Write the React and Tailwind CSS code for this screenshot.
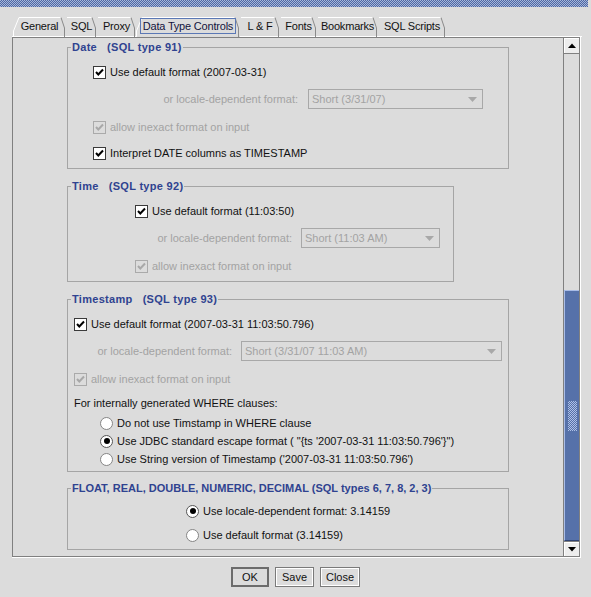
import React from 'react';

const TABS = [
  { label: 'General', w: 'w-[53px]', n: 53, first: true },
  { label: 'SQL', w: 'w-[31px]', n: 31 },
  { label: 'Proxy', w: 'w-[39px]', n: 39 },
  { label: 'Data Type Controls', w: 'w-[104px]', n: 104, sel: true },
  { label: 'L & F', w: 'w-[40px]', n: 40 },
  { label: 'Fonts', w: 'w-[37px]', n: 37 },
  { label: 'Bookmarks', w: 'w-[61px]', n: 61 },
  { label: 'SQL Scripts', w: 'w-[68px]', n: 68 },
];

function Tab({ t }) {
  const W = t.n;
  const slant = t.first || t.sel;
  return (
    <div
      className={`relative flex h-[20px] shrink-0 items-center justify-center ${t.w} ${
        t.sel ? 'border-b border-transparent' : 'border-b border-white'
      }`}
    >
      <svg className="absolute left-0 top-0" width={W} height="20" viewBox={`0 0 ${W} 20`}>
        <path d={`M${slant ? 6 : 1} 0.5 H${W - 5}`} stroke="#ffffff" strokeWidth="1" fill="none" />
        {slant && <path d="M0.5 20 V14 L6 0.5" stroke="#ffffff" strokeWidth="1" fill="none" />}
        <path d={`M${W - 5} 0.5 L${W - 1.5} 11 V20`} stroke="#8a8a8a" strokeWidth="1" fill="none" />
      </svg>
      {t.sel ? (
        <span className="relative mt-[-1px] flex h-[16px] w-[96px] items-center justify-center border border-[#5b78b5] tracking-[-0.2px] text-[#14143c]">
          {t.label}
        </span>
      ) : (
        <span className="relative tracking-[-0.2px] text-[#111]">{t.label}</span>
      )}
    </div>
  );
}

function Check({ disabled }) {
  return (
    <span
      className={
        disabled
          ? 'flex h-[13px] w-[13px] shrink-0 items-center justify-center border border-[#aaaaaa] bg-[#dcdcdc]'
          : 'flex h-[13px] w-[13px] shrink-0 items-center justify-center border border-[#3a3a3a] bg-white'
      }
    >
      <svg width="11" height="11" viewBox="0 0 11 11">
        <path
          d="M2 5 L4.3 7.5 L9 2.5"
          fill="none"
          stroke={disabled ? '#a8a8a8' : '#000000'}
          strokeWidth="2"
        />
      </svg>
    </span>
  );
}

function Radio({ on }) {
  return (
    <span
      className={
        on
          ? 'flex h-[13px] w-[13px] shrink-0 items-center justify-center rounded-full border border-[#555555] bg-white'
          : 'flex h-[13px] w-[13px] shrink-0 items-center justify-center rounded-full border border-[#858585] bg-white'
      }
    >
      {on && <span className="h-[6px] w-[6px] rounded-full bg-black" />}
    </span>
  );
}

function Combo({ w, text }) {
  return (
    <div className={`flex h-[20px] items-center border border-[#a8a8a8] pl-[3px] text-[#a3a3a3] ${w}`}>
      <span className="flex-1 whitespace-nowrap">{text}</span>
      <svg className="mr-[5px]" width="9" height="5" viewBox="0 0 9 5">
        <path d="M0 0 H9 L4.5 5 Z" fill="#a8a8a8" />
      </svg>
    </div>
  );
}

function Group({ title, w, bodyClass, children, track }) {
  return (
    <div className={w}>
      <div className="flex h-[13px] items-end">
        <div className="h-[7px] w-[4px] border-l border-t border-[#a5a5a5]" />
        <span
          className={`self-center whitespace-pre px-[1px] font-bold leading-[13px] text-[#2f4390] ${track}`}
        >
          {title}
        </span>
        <div className="h-[7px] flex-1 border-r border-t border-[#a5a5a5]" />
      </div>
      <div className={`border-x border-b border-[#a5a5a5] ${bodyClass}`}>{children}</div>
    </div>
  );
}

function CheckRow({ label, disabled, pad, extra }) {
  return (
    <div className={`flex h-[20px] items-center gap-[4px] ${pad} ${extra || ''}`}>
      <Check disabled={disabled} />
      <span className={disabled ? 'whitespace-nowrap text-[#a3a3a3]' : 'whitespace-nowrap text-[#111]'}>
        {label}
      </span>
    </div>
  );
}

function RadioRow({ label, on, pad, h }) {
  return (
    <div className={`flex items-center gap-[4px] ${h} ${pad}`}>
      <Radio on={on} />
      <span className="whitespace-nowrap text-[#111]">{label}</span>
    </div>
  );
}

function Btn({ label, w, def }) {
  return (
    <div
      className={
        def
          ? `flex h-[20px] items-center justify-center border-2 border-[#6c6c6c] text-[#111] ${w}`
          : `flex h-[20px] items-center justify-center border border-[#7a7a7a] text-[#111] shadow-[inset_1px_1px_0_#ffffff,inset_-1px_-1px_0_#ffffff] ${w}`
      }
    >
      {label}
    </div>
  );
}

export default function App() {
  return (
    <div className="flex h-[597px] w-[591px] flex-col overflow-hidden bg-[#dcdcdc] font-['Liberation_Sans',Arial,sans-serif] text-[11px] leading-[13px] text-[#111]">
      <div className="mr-[3px] h-[7px] bg-[repeating-conic-gradient(#4d68a4_0%_25%,#a6b5d9_0%_50%)] bg-[length:2px_2px]" />

      {/* tabs */}
      <div className="ml-[12px] mt-[10px] flex w-[570px]">
        <div className="h-[20px] w-[1px] border-b border-white" />
        {TABS.map((t) => (
          <Tab key={t.label} t={t} />
        ))}
        <div className="h-[20px] flex-1 border-b border-white" />
      </div>

      {/* scroll pane */}
      <div className="ml-[12px] w-[569px] border-b border-r border-white">
        <div className="flex h-[520px] w-[568px] border border-[#808080]">
          <div className="h-full w-[550px] overflow-hidden pl-[54px] pt-[3px]">
            <Group
              title={'Date   (SQL type 91)'}
              w="w-[442px]"
              track="tracking-[0.3px]"
              bodyClass="pt-[8px] pb-[5px]"
            >
              <CheckRow label="Use default format (2007-03-31)" pad="pl-[25px]" />
              <div className="mt-[7px] flex h-[20px] items-center justify-end pr-[25px]">
                <span className="whitespace-nowrap text-[#a3a3a3]">or locale-dependent format:</span>
                <div className="ml-[10px]">
                  <Combo w="w-[175px]" text="Short (3/31/07)" />
                </div>
              </div>
              <CheckRow label="allow inexact format on input" disabled pad="pl-[25px]" extra="mt-[8px]" />
              <CheckRow label="Interpret DATE columns as TIMESTAMP" pad="pl-[25px]" extra="mt-[6px]" />
            </Group>

            <div className="mt-[11px]">
              <Group
                title={'Time   (SQL type 92)'}
                w="w-[387px]"
                track="tracking-[0.3px]"
                bodyClass="pt-[8px] pb-[5px]"
              >
                <CheckRow label="Use default format (11:03:50)" pad="pl-[67px]" />
                <div className="mt-[7px] flex h-[20px] items-center justify-end pr-[13px]">
                  <span className="whitespace-nowrap text-[#a3a3a3]">or locale-dependent format:</span>
                  <div className="ml-[9px]">
                    <Combo w="w-[139px]" text="Short (11:03 AM)" />
                  </div>
                </div>
                <CheckRow label="allow inexact format on input" disabled pad="pl-[67px]" extra="mt-[8px]" />
              </Group>
            </div>

            <div className="mt-[11px]">
              <Group
                title={'Timestamp   (SQL type 93)'}
                w="w-[442px]"
                track="tracking-[0.3px]"
                bodyClass="pt-[8px] pb-[3px]"
              >
                <CheckRow label="Use default format (2007-03-31 11:03:50.796)" pad="pl-[6px]" />
                <div className="mt-[7px] flex h-[20px] items-center justify-end pr-[6px]">
                  <span className="whitespace-nowrap text-[#a3a3a3]">or locale-dependent format:</span>
                  <div className="ml-[9px]">
                    <Combo w="w-[261px]" text="Short (3/31/07 11:03 AM)" />
                  </div>
                </div>
                <CheckRow label="allow inexact format on input" disabled pad="pl-[6px]" extra="mt-[8px]" />
                <div className="mt-[6px] flex h-[16px] items-center pl-[6px] text-[#111]">
                  For internally generated WHERE clauses:
                </div>
                <div className="mt-[3px]">
                  <RadioRow label="Do not use Timstamp in WHERE clause" pad="pl-[32px]" h="h-[18px]" />
                  <RadioRow
                    label={'Use JDBC standard escape format ( "{ts \'2007-03-31 11:03:50.796\'}")'}
                    on
                    pad="pl-[32px]"
                    h="h-[18px]"
                  />
                  <RadioRow
                    label={"Use String version of Timestamp ('2007-03-31 11:03:50.796')"}
                    pad="pl-[32px]"
                    h="h-[18px]"
                  />
                </div>
              </Group>
            </div>

            <div className="mt-[10px]">
              <Group
                title="FLOAT, REAL, DOUBLE, NUMERIC, DECIMAL (SQL types 6, 7, 8, 2, 3)"
                w="w-[442px]"
                track=""
                bodyClass="pt-[6px] pb-[4px]"
              >
                <RadioRow label="Use locale-dependent format: 3.14159" on pad="pl-[118px]" h="h-[20px]" />
                <div className="mt-[4px]">
                  <RadioRow label="Use default format (3.14159)" pad="pl-[118px]" h="h-[20px]" />
                </div>
              </Group>
            </div>
          </div>

          {/* scrollbar */}
          <div className="flex h-full w-[16px] flex-col border-l border-[#808080]">
            <div className="flex h-[16px] items-center justify-center border-b border-[#808080] bg-[#ededed] shadow-[inset_1px_1px_0_#ffffff]">
              <svg width="8" height="5" viewBox="0 0 8 5">
                <path d="M0 5 H8 L4 0.5 Z" fill="#000000" />
              </svg>
            </div>
            <div className="flex flex-1 flex-col justify-end">
              <div className="flex h-[251px] items-center justify-center border-b border-l border-t border-b-[#2f4373] border-l-[#a9bce6] border-t-[#a9bce6] bg-[#5671a9]">
                <div className="h-[30px] w-[9px] bg-[repeating-conic-gradient(#aec0e6_0%_25%,transparent_0%_50%)] bg-[length:2px_2px]" />
              </div>
            </div>
            <div className="flex h-[15px] items-center justify-center border-t border-[#808080] bg-[#ededed] shadow-[inset_1px_1px_0_#ffffff]">
              <svg width="8" height="5" viewBox="0 0 8 5">
                <path d="M0 0 H8 L4 4.5 Z" fill="#000000" />
              </svg>
            </div>
          </div>
        </div>
      </div>

      {/* buttons */}
      <div className="mt-[9px] flex justify-center gap-[6px]">
        <Btn label="OK" w="w-[38px]" def />
        <Btn label="Save" w="w-[39px]" />
        <Btn label="Close" w="w-[40px]" />
      </div>
    </div>
  );
}
